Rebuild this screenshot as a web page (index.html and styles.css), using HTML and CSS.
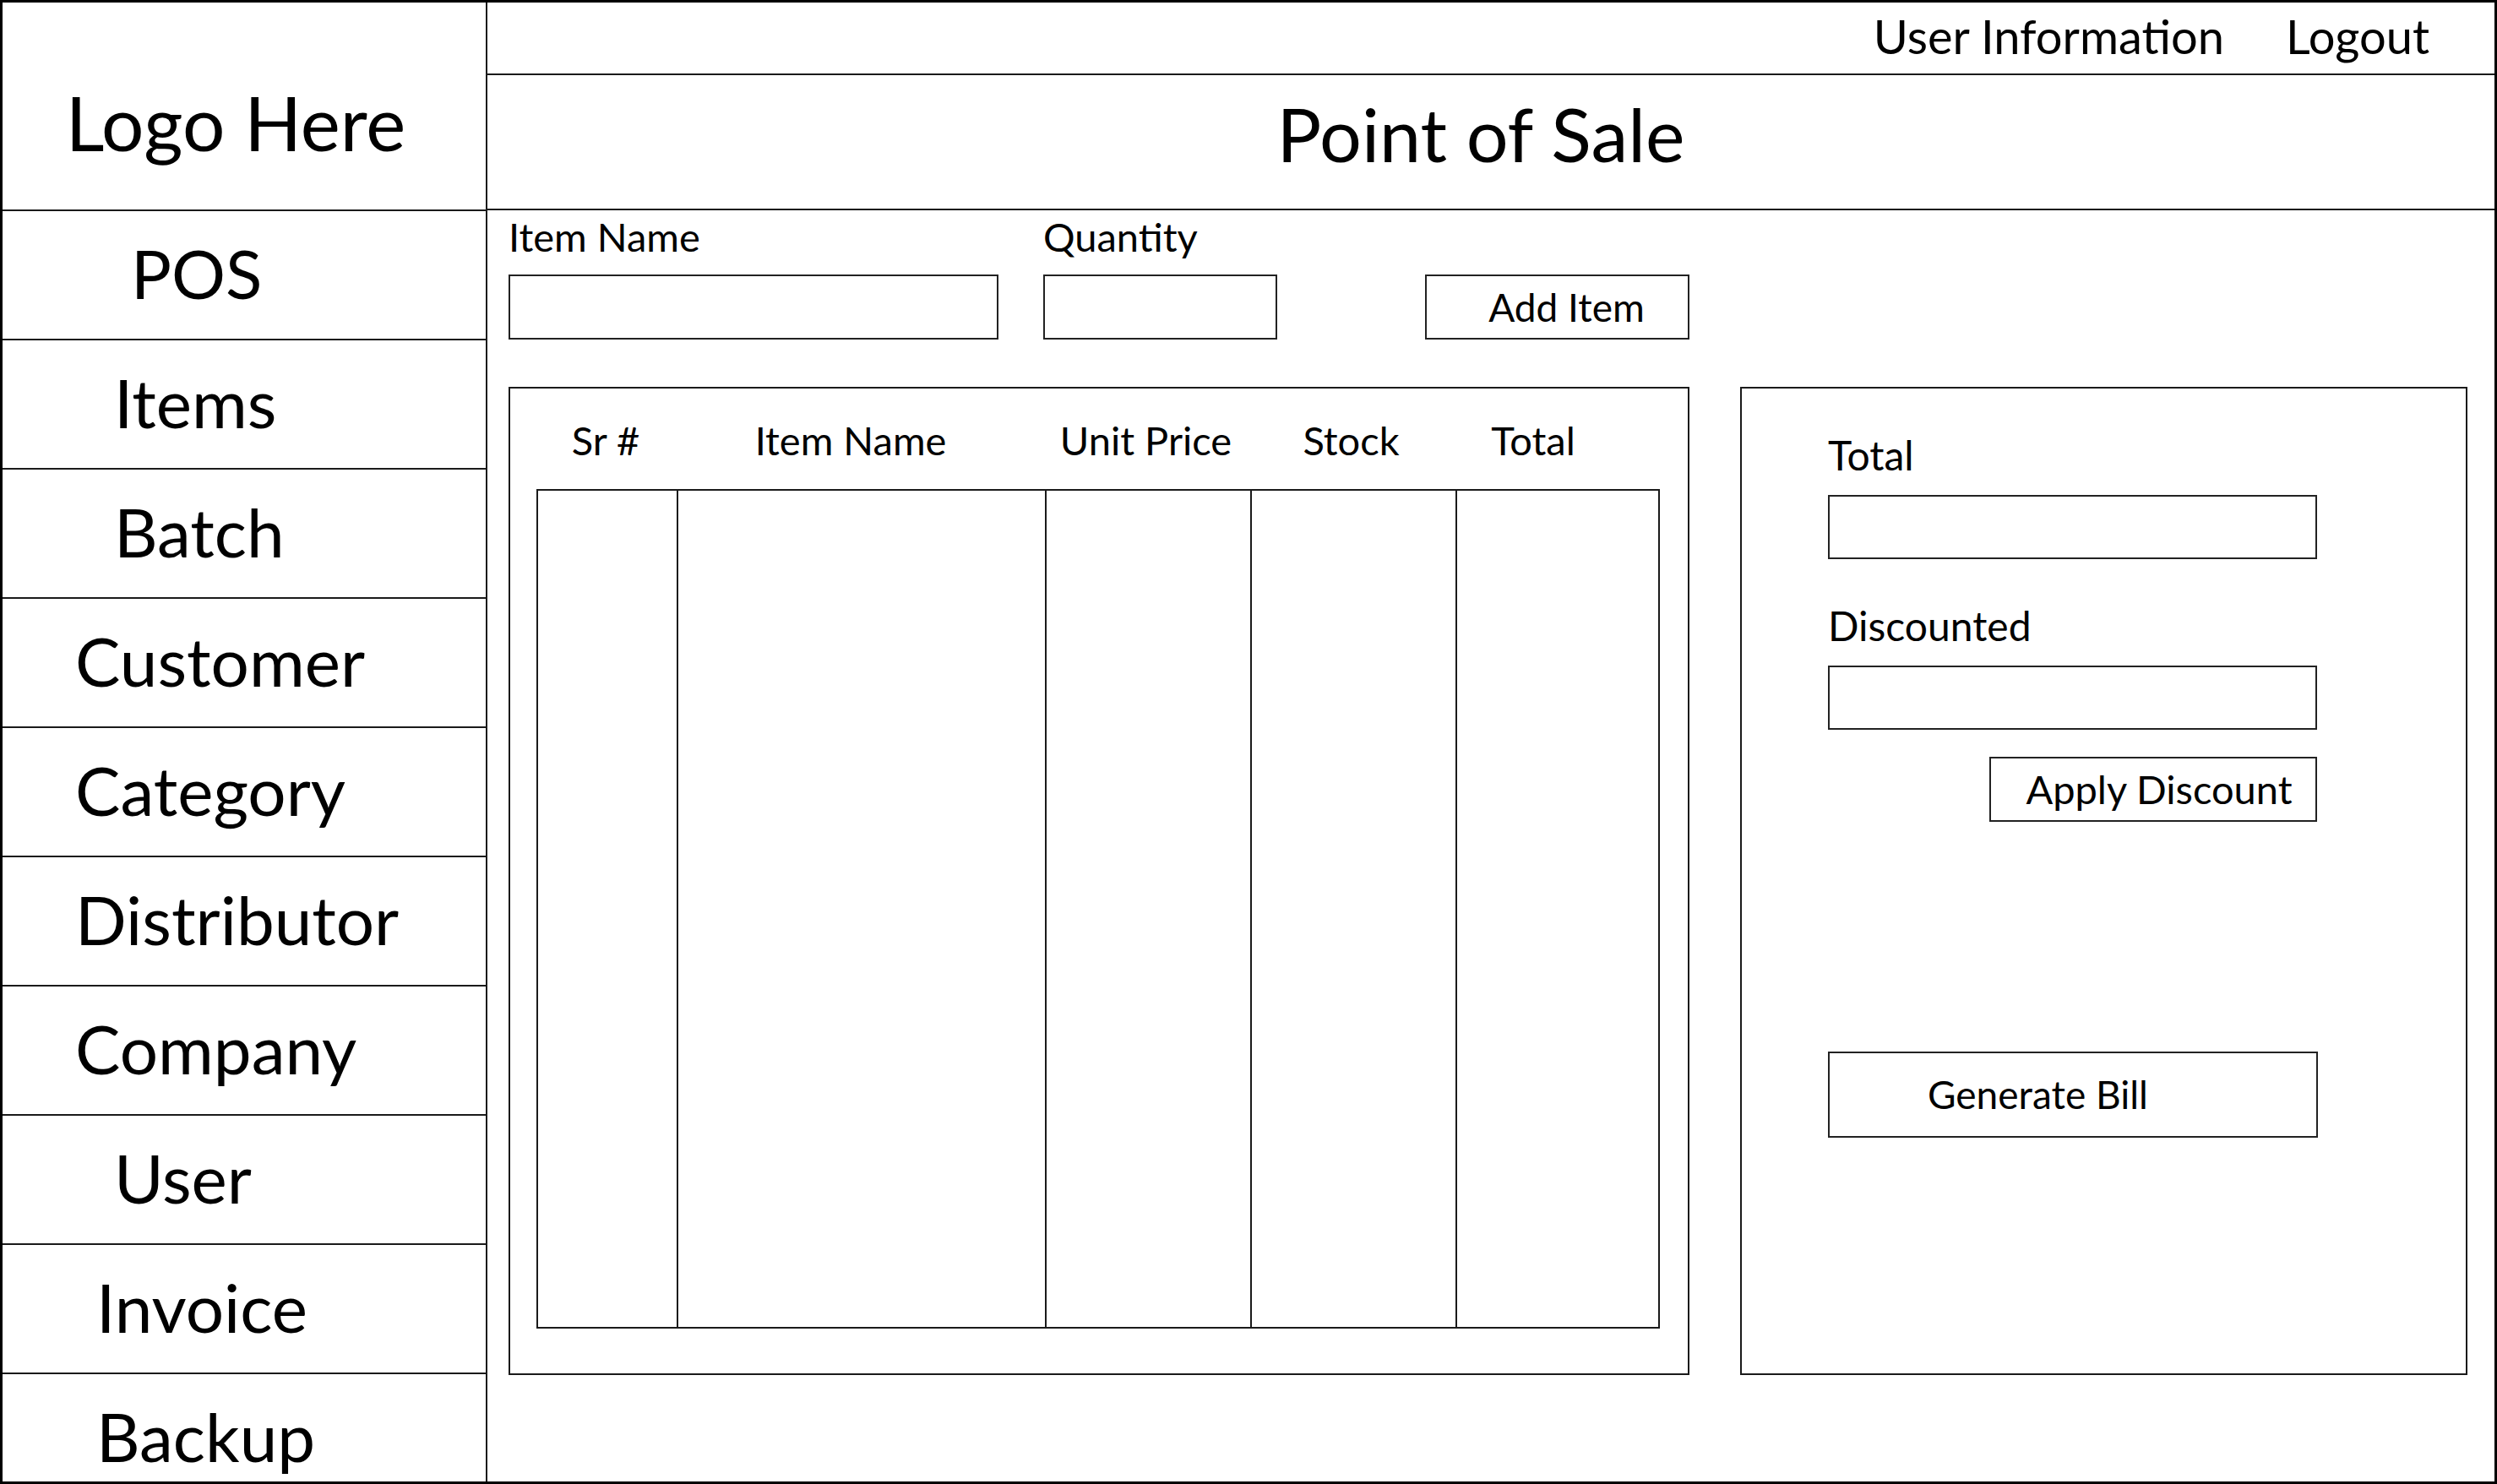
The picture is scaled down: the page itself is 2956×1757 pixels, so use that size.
FILE: index.html
```html
<!DOCTYPE html>
<html lang="en">
<head>
<meta charset="utf-8">
<title>Point of Sale</title>
<link rel="stylesheet" href="styles.css">
</head>
<body>
<div class="frame">
  <aside class="sidebar">
    <div class="logo">Logo Here</div>
    <nav class="nav">
      <div class="nav-item indent-xl">POS</div>
      <div class="nav-item indent-lg">Items</div>
      <div class="nav-item indent-lg">Batch</div>
      <div class="nav-item indent-sm">Customer</div>
      <div class="nav-item indent-sm">Category</div>
      <div class="nav-item indent-sm">Distributor</div>
      <div class="nav-item indent-sm">Company</div>
      <div class="nav-item indent-lg">User</div>
      <div class="nav-item indent-md">Invoice</div>
      <div class="nav-item indent-md">Backup</div>
    </nav>
  </aside>
  <main class="main">
    <div class="topbar">
      <span class="top-link">User Information</span>
      <span class="top-link">Logout</span>
    </div>
    <header class="title-bar">
      <h1 class="title">Point of Sale</h1>
    </header>
    <section class="content">
      <div class="entry-row">
        <div class="entry entry-name">
          <label class="label">Item Name</label>
          <input class="field" type="text">
        </div>
        <div class="entry entry-qty">
          <label class="label">Quantity</label>
          <input class="field" type="text">
        </div>
        <button class="btn btn-add">Add Item</button>
      </div>
      <div class="panels">
        <div class="panel table-panel">
          <div class="grid-head">
            <div class="th">Sr #</div>
            <div class="th th-name">Item Name</div>
            <div class="th">Unit Price</div>
            <div class="th">Stock</div>
            <div class="th th-total">Total</div>
          </div>
          <div class="grid-body">
            <div class="col"></div>
            <div class="col"></div>
            <div class="col"></div>
            <div class="col"></div>
            <div class="col"></div>
          </div>
        </div>
        <div class="panel summary-panel">
          <div class="summary">
            <label class="label label-lg">Total</label>
            <input class="field field-wide" type="text">
            <label class="label label-lg label-gap">Discounted</label>
            <input class="field field-wide" type="text">
            <button class="btn btn-apply">Apply Discount</button>
            <button class="btn btn-bill">Generate Bill</button>
          </div>
        </div>
      </div>
    </section>
  </main>
</div>
</body>
</html>
```
FILE: styles.css
```css
* { box-sizing: border-box; }
html, body { margin: 0; padding: 0; background: #fff; }
body {
  font-family: "Lato", "Open Sans", sans-serif;
  color: #000;
}
.frame {
  width: 2956px;
  height: 1757px;
  border: 3px solid #000;
  display: grid;
  grid-template-columns: 574px 1fr;
  overflow: hidden;
}
.sidebar {
  border-right: 2px solid #1a1a1a;
  display: flex;
  flex-direction: column;
  overflow: hidden;
}
.logo {
  height: 247px;
  flex: none;
  border-bottom: 2px solid #1a1a1a;
  display: flex;
  align-items: center;
  justify-content: center;
  font-size: 89px;
  line-height: 1.2;
  padding-top: 40px;
  padding-right: 20px;
}
.nav { display: flex; flex-direction: column; }
.nav-item {
  height: 153px;
  flex: none;
  border-bottom: 2px solid #1a1a1a;
  display: flex;
  align-items: center;
  font-size: 80px;
  line-height: 1.2;
  padding-bottom: 6px;
}
.indent-xl { padding-left: 152px; }
.indent-lg { padding-left: 132px; }
.indent-md { padding-left: 111px; }
.indent-sm { padding-left: 86px; }

.main { display: flex; flex-direction: column; min-width: 0; }
.topbar {
  height: 86px;
  flex: none;
  border-bottom: 2px solid #1a1a1a;
  display: flex;
  justify-content: flex-end;
  align-items: center;
  gap: 73px;
  padding-right: 77px;
  padding-bottom: 4px;
  font-size: 56px;
  line-height: 1.2;
}
.title-bar {
  height: 160px;
  flex: none;
  border-bottom: 2px solid #1a1a1a;
  display: flex;
  align-items: center;
  justify-content: center;
  padding-bottom: 18px;
  padding-right: 24px;
}
.title {
  margin: 0;
  font-size: 88px;
  font-weight: 400;
  line-height: 1.2;
}
.content {
  flex: 1;
  padding: 3px 32px 0 25px;
  display: flex;
  flex-direction: column;
}
.entry-row {
  display: flex;
  align-items: flex-end;
}
.entry { display: flex; flex-direction: column; }
.entry-name { width: 580px; margin-right: 53px; }
.entry-qty { width: 277px; margin-right: 175px; }
.label {
  font-size: 47px;
  line-height: 1.2;
  margin-bottom: 17px;
  white-space: nowrap;
}
.field {
  display: block;
  width: 100%;
  height: 77px;
  border: 2px solid #222;
  border-radius: 0;
  background: #fff;
  margin: 0;
  padding: 0;
  outline: none;
}
.btn {
  font-family: "Lato", "Open Sans", sans-serif;
  color: #000;
  background: #fff;
  border: 2px solid #222;
  border-radius: 0;
  margin: 0;
  padding: 0;
  display: flex;
  align-items: center;
  justify-content: center;
  line-height: 1.2;
}
.btn-add {
  width: 313px;
  height: 77px;
  font-size: 46px;
  padding-left: 22px;
}
.panels {
  display: flex;
  gap: 60px;
  margin-top: 56px;
}
.panel {
  height: 1170px;
  border: 2px solid #1a1a1a;
}
.table-panel {
  width: 1398px;
  display: flex;
  flex-direction: column;
  padding: 0 33px 53px 31px;
}
.grid-head, .grid-body {
  display: grid;
  grid-template-columns: 164px 436px 243px 243px 1fr;
}
.grid-head {
  height: 119px;
  flex: none;
  padding-top: 33px;
}
.th {
  font-size: 47px;
  line-height: 1.2;
  text-align: center;
  white-space: nowrap;
}
.th-name { padding-right: 20px; }
.th-total { padding-right: 56px; }
.grid-body {
  flex: 1;
  border: 2px solid #1a1a1a;
}
.col { border-left: 2px solid #1a1a1a; }
.col:first-child { border-left: none; }
.summary-panel {
  width: 861px;
  padding: 50px 0 0 102px;
}
.summary {
  width: 579px;
  display: flex;
  flex-direction: column;
}
.label-lg { font-size: 48px; margin-bottom: 18px; }
.label-gap { margin-top: 50px; }
.field-wide { height: 76px; }
.btn-apply {
  align-self: flex-end;
  width: 388px;
  height: 77px;
  margin-top: 32px;
  font-size: 47px;
  padding-left: 14px;
}
.btn-bill {
  width: 580px;
  height: 102px;
  margin-top: 272px;
  font-size: 46px;
  justify-content: flex-start;
  padding-left: 116px;
}
```
